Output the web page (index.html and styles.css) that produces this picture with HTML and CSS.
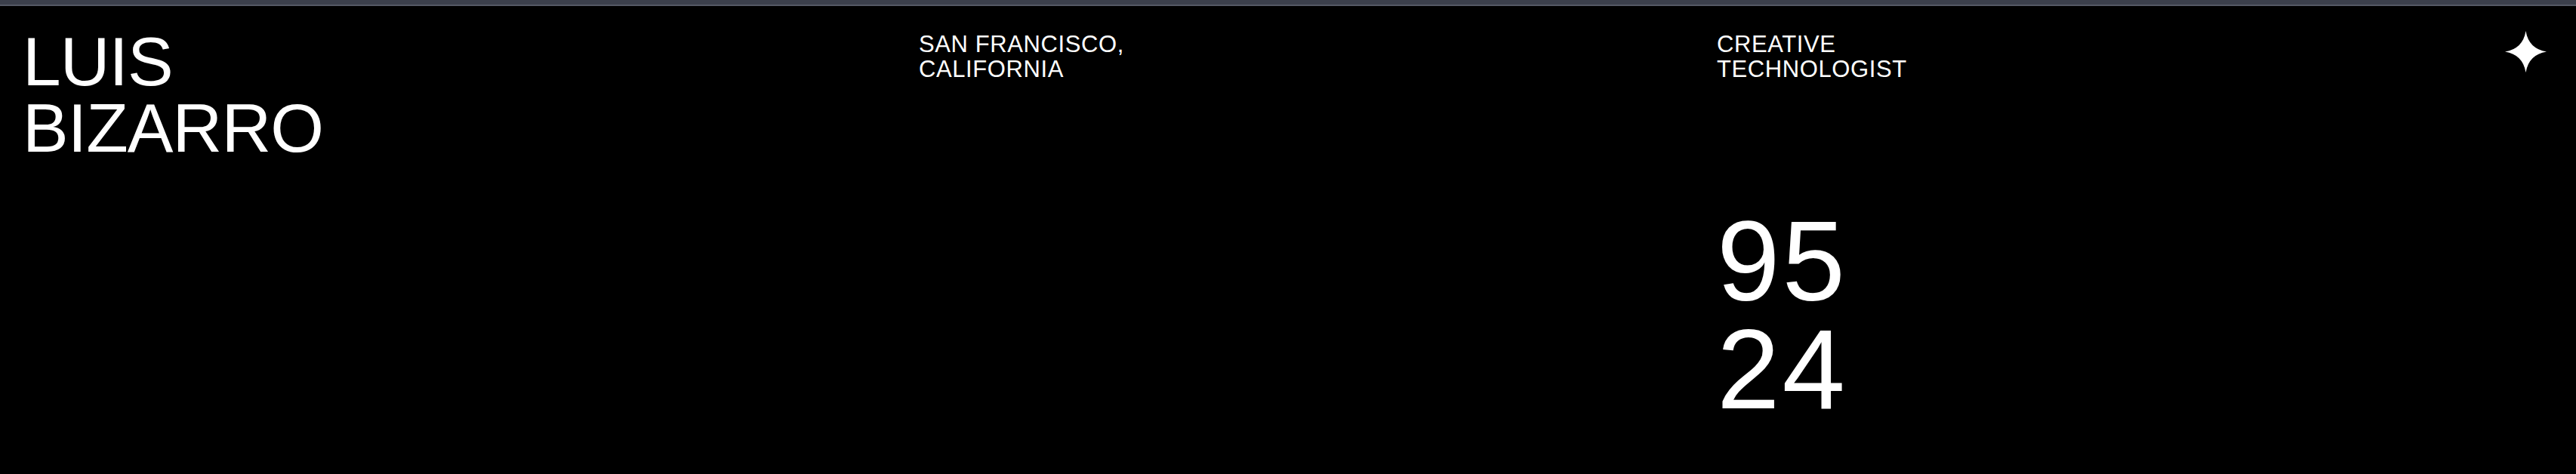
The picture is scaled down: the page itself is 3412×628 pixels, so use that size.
FILE: index.html
```html
<!DOCTYPE html>
<html lang="en">
<head>
<meta charset="utf-8">
<title>Luis Bizarro</title>
<link rel="stylesheet" href="styles.css">
</head>
<body>
<div class="topbar"></div>
<header class="hero">
  <h1 class="name">LUIS<br>BIZARRO</h1>
  <p class="meta">SAN FRANCISCO,<br>CALIFORNIA</p>
  <div class="col-role">
    <p class="meta">CREATIVE<br>TECHNOLOGIST</p>
    <div class="year">95<br>24</div>
  </div>
  <svg class="star" viewBox="0 0 100 100" aria-hidden="true">
    <path d="M50 0 Q57 43 100 50 Q57 57 50 100 Q43 57 0 50 Q43 43 50 0 Z" fill="#fff"/>
  </svg>
</header>
</body>
</html>
```
FILE: styles.css
```css
* { box-sizing: border-box; }
html, body { margin: 0; padding: 0; }
body {
  background: #000;
  color: #fff;
  font-family: "Liberation Sans", Arial, sans-serif;
  height: 628px;
  overflow: hidden;
}
.topbar {
  height: 8px;
  background: #3b3f4b;
  border-bottom: 2px solid #555965;
}
.hero {
  display: grid;
  grid-template-columns: 1187px 1057px 1fr 55px;
  padding: 30px 39px 0 30px;
  align-items: start;
}
.name {
  margin: 0;
  font-weight: 400;
  font-size: 91px;
  line-height: 88px;
  letter-spacing: -0.01em;
}
.meta {
  margin: 4px 0 0;
  font-size: 31px;
  line-height: 33px;
  font-weight: 400;
  letter-spacing: 0.6px;
}
.col-role {
  display: flex;
  flex-direction: column;
}
.year {
  margin-top: 167px;
  font-size: 150px;
  line-height: 143px;
  letter-spacing: 3px;
}
.star {
  width: 55px;
  height: 55px;
  margin-top: 3px;
}
```
